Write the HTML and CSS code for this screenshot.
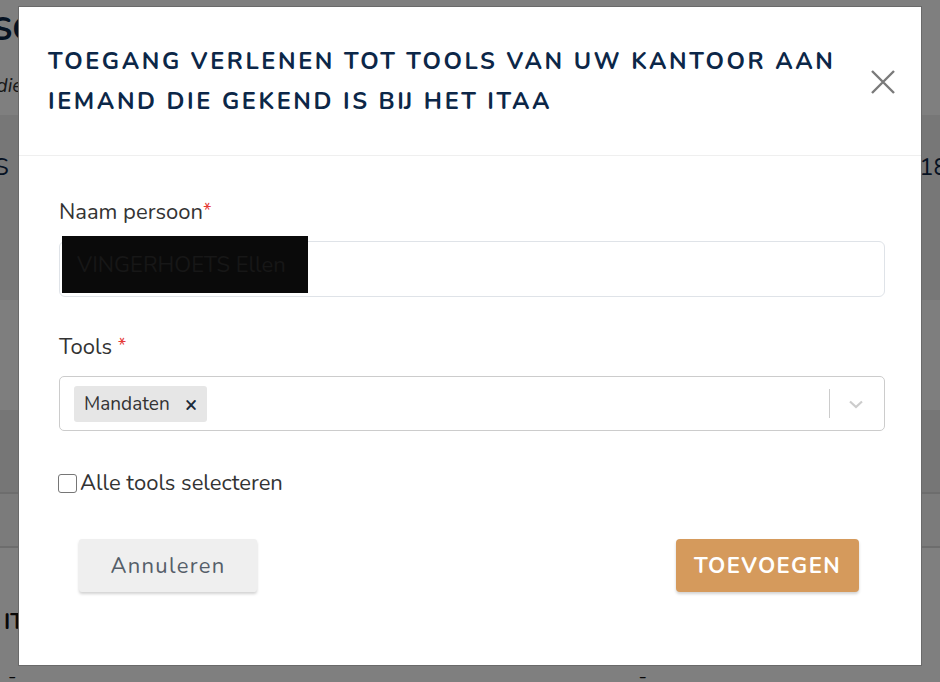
FILE: index.html
```html
<!DOCTYPE html>
<html lang="nl">
<head>
<meta charset="utf-8">
<title>Toegang verlenen</title>
<link rel="stylesheet" href="styles.css">
</head>
<body>
<div class="page">
  <div class="pg-head">
    <div class="pg-title">SCHERM</div>
    <div class="pg-sub">die</div>
  </div>
  <div class="pg-band1">
    <div class="pg-row"><span>S</span><span class="pg-num">18</span></div>
  </div>
  <div class="pg-band2"></div>
  <div class="pg-band3"></div>
  <div class="pg-line"></div>
  <div class="pg-band4"></div>
  <div class="pg-line"></div>
  <div class="pg-band5">
    <div class="pg-bold">IT</div>
  </div>
  <div class="pg-foot"><span>-</span><span class="pg-dash2">-</span></div>
</div>
<div class="overlay"></div>
<div class="modal">
  <div class="modal-header">
    <h2 class="modal-title">TOEGANG VERLENEN TOT TOOLS VAN UW KANTOOR AAN IEMAND DIE GEKEND IS BIJ HET ITAA</h2>
    <button class="close" aria-label="Sluiten">
      <svg width="26" height="26" viewBox="0 0 26 26"><path d="M2 2 L24 24 M24 2 L2 24" stroke="#7a7a7a" stroke-width="2.4" fill="none"/></svg>
    </button>
  </div>
  <div class="modal-body">
    <div class="field">
      <label class="label">Naam persoon<span class="req">*</span></label>
      <div class="input">
        <span class="redact">VINGERHOETS Ellen</span>
      </div>
    </div>
    <div class="field">
      <label class="label">Tools <span class="req">*</span></label>
      <div class="select">
        <div class="chips">
          <span class="chip">Mandaten <span class="chip-x">×</span></span>
        </div>
        <div class="indicators">
          <span class="sep"></span>
          <svg class="chev" width="20" height="20" viewBox="0 0 20 20"><path d="M4 7.5 L10 13 L16 7.5" stroke="#cccccc" stroke-width="2.2" fill="none"/></svg>
        </div>
      </div>
    </div>
    <div class="check-row">
      <span class="checkbox"></span><span class="check-label">Alle tools selecteren</span>
    </div>
    <div class="footer">
      <button class="btn btn-cancel">Annuleren</button>
      <button class="btn btn-add">TOEVOEGEN</button>
    </div>
  </div>
</div>
</body>
</html>
```

FILE: styles.css
```css
html, body {
  margin: 0;
  padding: 0;
}
body {
  width: 940px;
  height: 682px;
  overflow: hidden;
  font-family: "Nunito", "Lato", "Open Sans", sans-serif;
  background: #ffffff;
  position: relative;
}
.page {
  display: flex;
  flex-direction: column;
  height: 682px;
  color: #0b2545;
}
.pg-head {
  height: 115px;
  background: #ffffff;
}
.pg-title {
  font-weight: 700;
  font-size: 32px;
  margin-left: -8px;
  margin-top: 10px;
  line-height: 40px;
}
.pg-sub {
  font-style: italic;
  font-size: 20px;
  margin-left: -4px;
  margin-top: 22px;
  color: #333;
}
.pg-band1 {
  height: 185px;
  background: #eeeeee;
}
.pg-row {
  display: flex;
  justify-content: space-between;
  font-size: 24px;
  margin-top: 36px;
  margin-left: -6px;
  margin-right: -8px;
  color: #0b2545;
}
.pg-band2 {
  height: 110px;
  background: #fdfdfd;
}
.pg-band3 {
  height: 82px;
  background: #ececec;
}
.pg-line {
  height: 2px;
  background: #dadada;
}
.pg-band4 {
  height: 52px;
  background: #f6f6f6;
}
.pg-band5 {
  flex: 1;
  background: #ffffff;
  padding-top: 59px;
}
.pg-bold {
  font-weight: 700;
  font-size: 22px;
  margin-left: 4px;
  color: #111;
}
.pg-foot {
  height: 10px;
  font-size: 20px;
  line-height: 10px;
  color: #111;
  padding-left: 8px;
}
.pg-dash2 {
  margin-left: 622px;
}
.overlay {
  position: absolute;
  inset: 0;
  background: rgba(0, 0, 0, 0.5);
}
.modal {
  position: absolute;
  left: 18px;
  top: 6px;
  width: 902px;
  height: 658px;
  background: #ffffff;
  border: 1px solid #6a6a6a;
  display: flex;
  flex-direction: column;
}
.modal-header {
  display: flex;
  align-items: center;
  justify-content: space-between;
  padding: 34px 25px 34px 29px;
  border-bottom: 1px solid #efefef;
}
.modal-title {
  margin: 0;
  font-size: 23.5px;
  line-height: 40px;
  font-weight: 700;
  letter-spacing: 2.6px;
  color: #0c2748;
  width: 800px;
}
.close {
  background: none;
  border: 0;
  padding: 0;
  width: 26px;
  height: 26px;
  margin-top: 2px;
  display: flex;
}
.modal-body {
  padding: 41px 36px 0 40px;
  display: flex;
  flex-direction: column;
}
.field {
  display: flex;
  flex-direction: column;
  gap: 15px;
  margin-bottom: 35px;
}
.label {
  font-size: 22px;
  line-height: 28px;
  color: #333333;
}
.req {
  color: #e53935;
  font-size: 19px;
  vertical-align: 2px;
}
.input {
  height: 54px;
  border: 1px solid #dfe3e8;
  border-radius: 6px;
  display: flex;
  align-items: center;
  position: relative;
}
.redact {
  position: absolute;
  left: 2px;
  top: -6px;
  width: 246px;
  height: 57px;
  background: #0a0a0a;
  color: #171717;
  font-size: 22px;
  display: flex;
  align-items: center;
  box-sizing: border-box;
  padding-left: 15px;
  white-space: nowrap;
  overflow: hidden;
}
.select {
  height: 53px;
  border: 1px solid #cccccc;
  border-radius: 5px;
  display: flex;
  align-items: center;
  justify-content: space-between;
  padding-left: 14px;
}
.chips {
  display: flex;
}
.chip {
  background: #e6e6e6;
  border-radius: 3px;
  height: 36px;
  width: 133px;
  box-sizing: border-box;
  padding-left: 10px;
  display: flex;
  align-items: center;
  font-size: 19px;
  color: #333;
}
.chip-x {
  font-weight: 700;
  font-size: 21px;
  color: #1b2a3a;
  margin-left: 15px;
}
.indicators {
  display: flex;
  align-items: center;
  padding-right: 18px;
}
.sep {
  width: 1px;
  height: 29px;
  background: #cccccc;
  margin-right: 16px;
}
.chev {
  display: block;
}
.check-row {
  display: flex;
  align-items: center;
  margin-top: 3px;
  height: 28px;
}
.checkbox {
  width: 17px;
  height: 17px;
  border: 1.5px solid #767676;
  border-radius: 3px;
  margin-left: -1px;
  margin-right: 3px;
}
.check-label {
  font-size: 22px;
  color: #333;
}
.footer {
  display: flex;
  justify-content: space-between;
  margin-top: 42px;
  padding: 0 26px 0 20px;
}
.btn {
  border: 0;
  font-family: "Nunito", "Lato", "Open Sans", sans-serif;
  height: 53px;
  border-radius: 3px;
  box-shadow: 0 2px 3px rgba(0, 0, 0, 0.18);
  cursor: pointer;
}
.btn-cancel {
  width: 178px;
  background: #efefef;
  color: #555e69;
  font-size: 22px;
  letter-spacing: 1.3px;
}
.btn-add {
  width: 183px;
  background: #d59a5c;
  color: #ffffff;
  font-size: 22px;
  font-weight: 700;
  letter-spacing: 1.4px;
  border-radius: 4px;
}
```
